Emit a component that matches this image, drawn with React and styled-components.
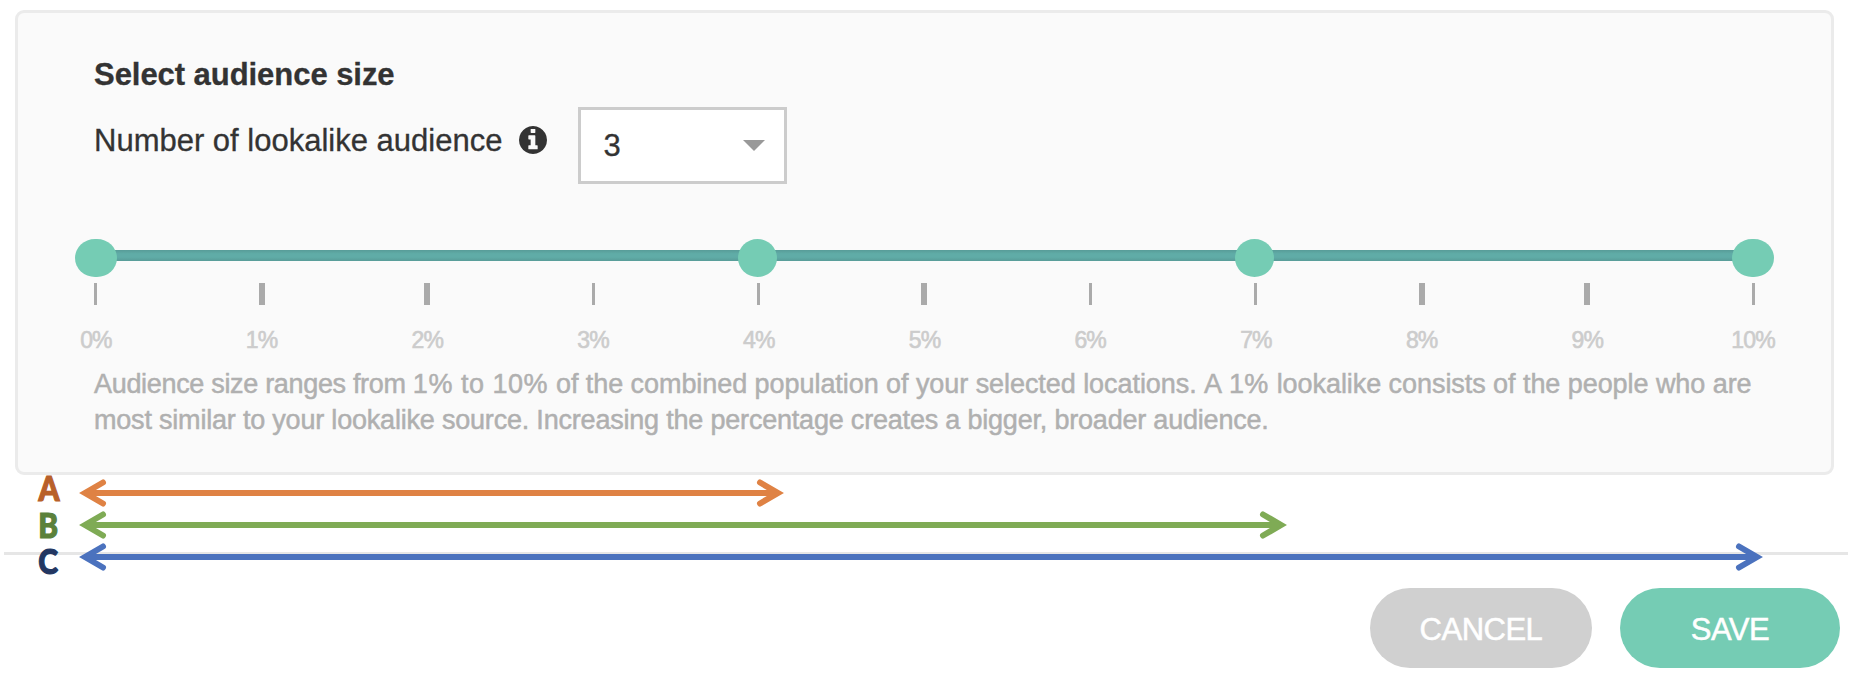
import React, { useState } from "react";
import styled, { createGlobalStyle } from "styled-components";

const GlobalStyle = createGlobalStyle`
  * {
    box-sizing: border-box;
  }

  body {
    margin: 0;
    background-color: #fff;
    font-family: "Liberation Sans", Arial, sans-serif;
    color: #333;
    -webkit-text-stroke: 0.3px;
  }
`;

const Page = styled.div`
  display: flex;
  flex-direction: column;
  height: 690px;
  overflow: hidden;
`;

const Card = styled.section`
  flex-shrink: 0;
  height: 465px;
  margin: 10px 20px 0 15px;
  padding: 44px 78px 0 76px;
  background-color: #fafafa;
  border: 3px solid #ebebeb;
  border-radius: 9px;
`;

const Title = styled.h2`
  margin: 0;
  font-size: 31px;
  line-height: 36px;
  font-weight: bold;
  letter-spacing: -0.05px;
`;

const CountRow = styled.div`
  display: flex;
  align-items: flex-start;
  margin-top: 14px;
`;

const Label = styled.label`
  margin-top: 16px;
  font-size: 31px;
  line-height: 36px;
`;

const InfoIcon = styled.svg`
  width: 28px;
  height: 28px;
  margin: 19px 31px 0 17px;
  fill: #333;
`;

const Select = styled.button`
  display: flex;
  align-items: center;
  justify-content: space-between;
  width: 209px;
  height: 77px;
  padding: 0 19px 0 22px;
  background-color: #fff;
  border: 3px solid #ccc;
  font-family: inherit;
  font-size: 31px;
  color: #333;
`;

const Caret = styled.span`
  border: 11px solid transparent;
  border-top-color: #999;
  border-bottom: 0;
`;

const Slider = styled.div`
  margin: 66px 0 0 2px;
  width: 1657px;
`;

const Track = styled.div`
  position: relative;
  height: 11px;
  background: linear-gradient(#589c98, #60aca7 35%, #60aca7 65%, #589c98);
`;

const Handle = styled.span`
  position: absolute;
  top: -11px;
  left: ${({ $value }) => $value * 10}%;
  width: ${({ $edge }) => ($edge ? 42 : 39)}px;
  height: 38px;
  margin-left: ${({ $edge }) => ($edge ? -21 : -20.5)}px;
  border-radius: ${({ $edge }) => ($edge ? "20px / 19px" : "50%")};
  background-color: #75ccb4;
`;

const Scale = styled.div`
  display: grid;
  grid-template-columns: repeat(11, 165.73px);
  margin: 22px 0 0 -83px;
`;

const Step = styled.div`
  display: flex;
  flex-direction: column;
  align-items: center;
  color: #ccc;
  font-size: 23px;
  line-height: 26px;
  letter-spacing: -0.9px;
  -webkit-text-stroke: 0.6px;
`;

const Tick = styled.span`
  width: ${({ $bold }) => ($bold ? 6 : 3)}px;
  height: 22px;
  margin-bottom: 22px;
  background-color: #aaa;
`;

const Description = styled.p`
  margin: 13px 0 0;
  font-size: 27px;
  line-height: 36px;
  letter-spacing: -0.06px;
  color: #b0b0b0;
  white-space: nowrap;
  -webkit-text-stroke: 0.5px;
`;

const Tracked = styled.span`
  letter-spacing: ${({ $spacing }) => $spacing}px;
`;

const Ranges = styled.div`
  display: flex;
  flex-shrink: 0;
  position: relative;
  z-index: 1;
  height: 100px;
  margin: -3px 0 -20px 36px;
`;

const Letters = styled.div`
  display: flex;
  flex-direction: column;
  align-items: center;
  width: 25px;
  margin-top: -2px;
  font-family: Lato, sans-serif;
  font-size: 34px;
  font-weight: 900;
  line-height: 36.5px;
  -webkit-text-stroke: 1.2px;
`;

const Letter = styled.span`
  color: ${({ $color }) => $color};
  transform: scaleX(0.88);
`;

const Arrows = styled.div`
  display: flex;
  flex-direction: column;
  margin: 5px 0 0 18px;
`;

const Arrow = styled.svg`
  display: block;
  flex-shrink: 0;
  height: 32px;
  fill: none;
  stroke: ${({ $color }) => $color};
  stroke-width: 6;
  stroke-linecap: round;
  stroke-miterlimit: 10;
`;

const Footer = styled.footer`
  display: flex;
  justify-content: flex-end;
  gap: 28px;
  margin: 0 6px 0 4px;
  padding: 33px 8px 0 0;
  border-top: 3px solid #e6e6e6;
`;

const Button = styled.button`
  width: ${({ $primary }) => ($primary ? 220 : 222)}px;
  height: 80px;
  padding: 3px 0 0;
  border: none;
  border-radius: 40px;
  background-color: ${({ $primary }) => ($primary ? "#75ccb4" : "#d0d0d0")};
  color: #fff;
  font-family: inherit;
  font-size: 31px;
  letter-spacing: -0.5px;
  -webkit-text-stroke: 0.5px;
`;

const steps = [0, 1, 2, 3, 4, 5, 6, 7, 8, 9, 10];
const boldSteps = [1, 2, 5, 8, 9];

const ranges = [
  { name: "A", color: "#df8244", letterColor: "#b8602a", width: 705 },
  { name: "B", color: "#7fab55", letterColor: "#5b813b", width: 1208 },
  { name: "C", color: "#4b72be", letterColor: "#233762", width: 1684 },
];

const Info = () => (
  <InfoIcon viewBox="0 128 1536 1536">
    <path d="M1024 1376v-160q0-14-9-23t-23-9h-96v-512q0-14-9-23t-23-9h-320q-14 0-23 9t-9 23v160q0 14 9 23t23 9h96v320h-96q-14 0-23 9t-9 23v160q0 14 9 23t23 9h448q14 0 23-9t9-23zm-128-896v-160q0-14-9-23t-23-9h-192q-14 0-23 9t-9 23v160q0 14 9 23t23 9h192q14 0 23-9t9-23zm640 416q0 209-103 385.5t-279.5 279.5-385.5 103-385.5-103-279.5-279.5-103-385.5 103-385.5 279.5-279.5 385.5-103 385.5 103 279.5 279.5 103 385.5z" />
  </InfoIcon>
);

const RangeArrow = ({ color, width }) => (
  <Arrow $color={color} width={width} viewBox={`0 0 ${width} 32`}>
    <path d="M24 5.5 L6 16 L24 26.5" />
    <path d={`M${width - 24} 5.5 L${width - 6} 16 L${width - 24} 26.5`} />
    <path d={`M10 16 H${width - 10}`} />
  </Arrow>
);

const App = () => {
  const [handles] = useState([0, 4, 7, 10]);

  return (
    <Page>
      <GlobalStyle />
      <Card>
        <Title>Select audience size</Title>
        <CountRow>
          <Label>Number of lookalike audience</Label>
          <Info />
          <Select>
            {handles.length - 1}
            <Caret />
          </Select>
        </CountRow>
        <Slider>
          <Track>
            {handles.map((value) => (
              <Handle
                key={value}
                $value={value}
                $edge={value === 0 || value === 10}
              />
            ))}
          </Track>
          <Scale>
            {steps.map((step) => (
              <Step key={step}>
                <Tick $bold={boldSteps.includes(step)} />
                {step}%
              </Step>
            ))}
          </Scale>
        </Slider>
        <Description>
          <Tracked $spacing={-0.32}>Audience size ranges from </Tracked>
          <Tracked $spacing={0.5}>1% to 10% </Tracked>
          of the combined population of your selected locations.{" "}
          <Tracked $spacing={0.4}>A 1% </Tracked>
          lookalike consists of the people who are
          <br />
          <Tracked $spacing={-0.2}>
            most similar to your lookalike source. Increasing the percentage
            creates a bigger, broader audience.
          </Tracked>
        </Description>
      </Card>
      <Ranges>
        <Letters>
          {ranges.map((range) => (
            <Letter key={range.name} $color={range.letterColor}>
              {range.name}
            </Letter>
          ))}
        </Letters>
        <Arrows>
          {ranges.map((range) => (
            <RangeArrow
              key={range.name}
              color={range.color}
              width={range.width}
            />
          ))}
        </Arrows>
      </Ranges>
      <Footer>
        <Button>CANCEL</Button>
        <Button $primary>SAVE</Button>
      </Footer>
    </Page>
  );
};

export default App;
